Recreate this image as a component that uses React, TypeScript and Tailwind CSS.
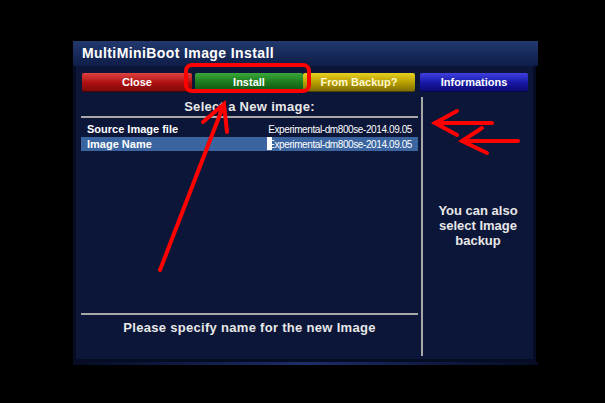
const buttons = [
  { label: 'Close', w: 'w-[110px]', cls: 'bg-gradient-to-b from-[#e04040] via-[#b01010] to-[#7a0808]', text: 'text-white' },
  { label: 'Install', w: 'w-[108px] ml-[3px]', cls: 'bg-gradient-to-b from-[#3aa83a] via-[#1c7a1c] to-[#0e500e]', text: 'text-white' },
  { label: 'From Backup?', w: 'w-[112px]', cls: 'bg-gradient-to-b from-[#e8d020] via-[#b8a000] to-[#7a6a00]', text: 'text-[#fff8d0]' },
  { label: 'Informations', w: 'w-[108px] ml-[5px]', cls: 'bg-gradient-to-b from-[#4040e0] via-[#1818a8] to-[#0a0a70]', text: 'text-white' },
];

const value = 'Experimental-dm800se-2014.09.05';

const Arrows = () => (
  <svg className="absolute left-0 top-0 pointer-events-none" width="605" height="403" viewBox="0 0 605 403">
    <g stroke="#ff0000" strokeWidth="4" strokeLinecap="round" fill="none">
      <path d="M160 270 L224 104" />
      <path d="M203 122 L224 104 L227 132" />
      <path d="M435 123 L492 123" />
      <path d="M457 111 L435 123 L457 135" />
      <path d="M462 141 L518 141" />
      <path d="M482 128 L462 141 L487 153" />
    </g>
  </svg>
);

export default function App() {
  return (
    <div className="relative w-[605px] h-[403px] bg-black overflow-hidden" style={{ fontFamily: '"Liberation Sans", Arial, sans-serif' }}>
      <div className="ml-[73px] pt-[41px] w-[465px]">
        {/* Title bar */}
        <div className="h-[25px] bg-gradient-to-b from-[#22396e] to-[#0f1d48] flex items-center pl-[9px]">
          <span className="text-white font-bold text-[14px] tracking-[0.4px]">MultiMiniBoot Image Install</span>
        </div>

        {/* Body */}
        <div className="h-[296px] w-[463px] bg-[#0c1638] border-l-[3px] border-r-[3px] border-b-[3px] border-[#060c24] flex flex-col">
          <div className="flex mt-[7px] ml-[6px] h-[19px]">
            {buttons.map((b) => (
              <div key={b.label} className={`${b.w} h-[19px] rounded-[2px] flex items-center justify-center shadow-[inset_0_-1px_0_rgba(0,0,0,0.4)] ${b.cls}`}>
                <span className={`text-[11px] font-bold ${b.text}`}>{b.label}</span>
              </div>
            ))}
          </div>

          <div className="flex flex-1">
            {/* Left column */}
            <div className="w-[337px] ml-[5px] flex flex-col">
              <div className="h-[23px] flex items-end justify-center text-[13px] font-bold text-[#e8e8e8] leading-[15px] pb-[1px] tracking-[0.3px]">
                Select a New image:
              </div>
              <div className="h-[2px] bg-[#a8a8a8] mt-[1px]" />
              <div className="mt-[4px] h-[14px] flex items-center justify-between pl-[6px] pr-[6px] text-white">
                <span className="text-[11px] font-bold">Source Image file</span>
                <span className="text-[10px] tracking-[-0.4px]">{value}</span>
              </div>
              <div className="mt-[1px] h-[14px] flex items-center justify-between pl-[6px] pr-[6px] bg-[#3a65a0] text-white">
                <span className="text-[11px] font-bold">Image Name</span>
                <span className="relative text-[10px] tracking-[-0.4px]">
                  <span className="absolute left-[-1px] top-[0px] w-[5px] h-[13px] bg-white" />
                  {value}
                </span>
              </div>
              <div className="flex-1" />
              <div className="h-[2px] bg-[#a8a8a8]" />
              <div className="h-[25px] flex items-center justify-center text-[13px] font-bold text-[#e8e8e8] tracking-[0.3px]">
                Please specify name for the new Image
              </div>
              <div className="h-[19px]" />
            </div>

            {/* Divider */}
            <div className="w-[2px] bg-[#a8a8a8] ml-[3px] mt-[5px] mb-[3px]" />

            {/* Right panel */}
            <div className="flex-1 flex items-center justify-center">
              <p className="text-[13px] font-bold text-[#e8e8e8] text-center leading-[15px] w-[100px]">
                You can also select Image backup
              </p>
            </div>
          </div>
        </div>
        <div className="h-[3px] w-[465px] bg-gradient-to-r from-[#060c24] via-[#1c2e6a] to-[#060c24]" />
      </div>

      {/* Highlight around Install */}
      <div className="absolute left-[184px] top-[63px] w-[127px] h-[30px] border-[4px] border-[#ff0000] rounded-[8px]" />
      <Arrows />
    </div>
  );
}
